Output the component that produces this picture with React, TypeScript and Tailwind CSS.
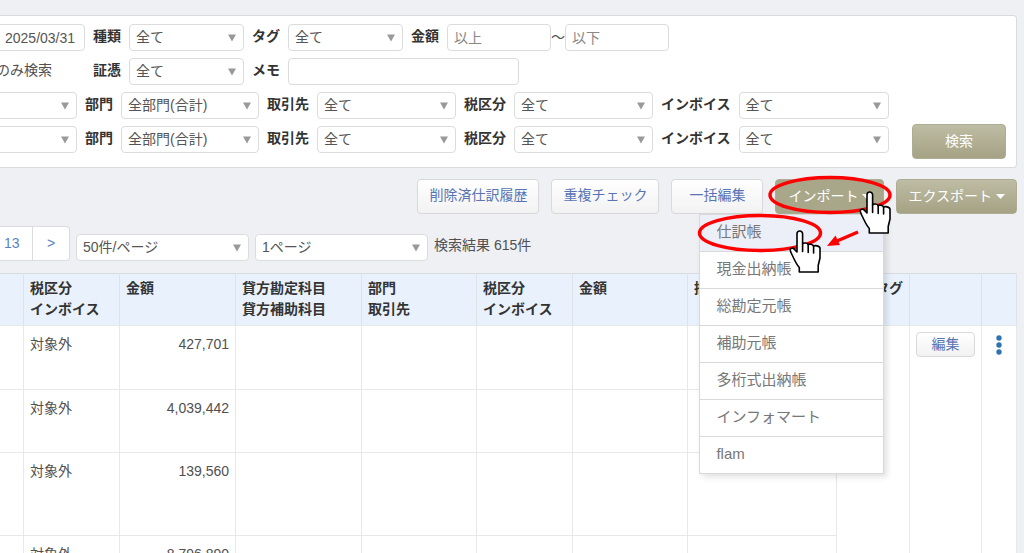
import type { ReactNode } from "react";

const importItems = [
  "仕訳帳",
  "現金出納帳",
  "総勘定元帳",
  "補助元帳",
  "多桁式出納帳",
  "インフォマート",
  "flam",
];

const rows = [
  { tax: "対象外", amount: "427,701", height: "h-16" },
  { tax: "対象外", amount: "4,039,442", height: "h-[63px]" },
  { tax: "対象外", amount: "139,560", height: "h-[83px]" },
  { tax: "対象外", amount: "8,796,890", height: "h-16" },
];

const box =
  "h-[27px] rounded border border-[#dcdcdc] bg-white px-1.5 text-sm leading-[21px] text-[#555] placeholder:text-[#888]";

function Select({ id, value, width, className = "" }: { id: string; value: string; width: string; className?: string }) {
  return (
    <div className={`relative shrink-0 ${width}`}>
      <select id={id} aria-label={value} className={`${box} block w-full appearance-none ${className}`}>
        <option>{value}</option>
      </select>
      <svg className="pointer-events-none absolute top-2.5 right-2" width="8" height="8" viewBox="0 0 8 8">
        <path d="M0 0.5h8L4 7.5z" fill="#999" />
      </svg>
    </div>
  );
}

function Label({ htmlFor, children }: { htmlFor: string; children: ReactNode }) {
  return (
    <label htmlFor={htmlFor} className="shrink-0 pb-[3px] font-bold text-[#333]">
      {children}
    </label>
  );
}

function LightButton({ children, className = "" }: { children: ReactNode; className?: string }) {
  return (
    <button
      type="button"
      className={`rounded border border-[#d9d9d9] bg-linear-to-b from-white to-[#f2f2f2] pb-0.5 text-[#5874b4] ${className}`}
    >
      {children}
    </button>
  );
}

function OliveButton({ children, className = "" }: { children: ReactNode; className?: string }) {
  return (
    <button
      type="button"
      className={`flex h-[35px] items-center justify-center gap-1 rounded border border-[#aeac93] text-white ${className}`}
    >
      {children}
    </button>
  );
}

function Caret() {
  return (
    <svg width="9" height="5" viewBox="0 0 9 5">
      <path d="M0 0h9L4.5 5z" fill="#fff" />
    </svg>
  );
}

function FilterRow({ n }: { n: number }) {
  return (
    <div className="flex items-center gap-2">
      <Select id={`account-${n}`} value="" width="w-[81px]" className="rounded-l-none" />
      <Label htmlFor={`dept-${n}`}>部門</Label>
      <Select id={`dept-${n}`} value="全部門(合計)" width="w-[138px]" />
      <Label htmlFor={`partner-${n}`}>取引先</Label>
      <Select id={`partner-${n}`} value="全て" width="w-[139px]" />
      <Label htmlFor={`tax-${n}`}>税区分</Label>
      <Select id={`tax-${n}`} value="全て" width="w-[139px]" />
      <Label htmlFor={`invoice-${n}`}>インボイス</Label>
      <Select id={`invoice-${n}`} value="全て" width="w-[150px]" />
    </div>
  );
}

const hand =
  "M8 22V3.8a2.8 2.8 0 0 1 5.6 0V14c.6-1.4 5-1.4 5.6.8 .8-1.2 4.8-.8 5.4 1.4 1-1 6.2-.6 6.4 2.2V28l-1.8 7.5V42H10.3v-4.5C8 35 6 31 4.6 28 3.5 25.5 1.5 22 1.3 20.3c-.3-2.3 2.6-2.8 4-1.2L8 22z";

function Hand({ x, y }: { x: number; y: number }) {
  return (
    <g transform={`translate(${x} ${y})`} stroke="#000" strokeWidth="1.6" strokeLinejoin="round" strokeLinecap="round">
      <path d={hand} fill="#fff" />
      <path d="M13.6 14v7.5M19.2 15v7.5M24.6 16.4v6.6" fill="none" />
    </g>
  );
}

// circles, arrow and pointers that walk the user through the import menu
function Guide() {
  return (
    <svg
      className="pointer-events-none absolute -top-1 -right-2.5 z-20 max-w-none"
      width="200"
      height="105"
      viewBox="0 0 200 105"
    >
      <g fill="none" stroke="#f00" strokeWidth="3.5">
        <ellipse cx="136" cy="20" rx="60" ry="17.5" />
        <ellipse cx="66" cy="58" rx="60.5" ry="17.5" />
        <path d="M164 57L143 66" />
      </g>
      <path d="M133 71l8.500-10.500 4.500 9.500z" fill="#f00" />
      <Hand x={165} y={16} />
      <Hand x={95} y={55} />
    </svg>
  );
}

export default function App() {
  return (
    <div className="h-screen overflow-hidden bg-[#eff0f4] text-sm leading-[21px] text-[#505050] [font-family:'Liberation_Sans','Noto_Sans_CJK_JP',sans-serif]">
      <main className="-ml-1 pt-[15px] pr-[7px]">
        <form className="flex items-end justify-between rounded-r border border-l-0 border-[#d9dbde] bg-white pt-2 pr-2.5 pb-2">
          <div className="flex flex-col gap-[7px] pb-1.5">
            <div className="flex items-center gap-2">
              <input aria-label="終了日" defaultValue="2025/03/31" className={`${box} w-[89px] px-2`} />
              <Label htmlFor="kind">種類</Label>
              <Select id="kind" value="全て" width="w-[115px]" />
              <Label htmlFor="tag">タグ</Label>
              <Select id="tag" value="全て" width="w-[115px]" />
              <Label htmlFor="min">金額</Label>
              <div className="flex items-center">
                <input id="min" placeholder="以上" className={`${box} w-[104px]`} />
                <span>～</span>
                <input aria-label="金額の上限" placeholder="以下" className={`${box} w-[104px]`} />
              </div>
            </div>
            <div className="flex items-center gap-2">
              <span className="w-[89px] pb-[3px]">のみ検索</span>
              <Label htmlFor="proof">証憑</Label>
              <Select id="proof" value="全て" width="w-[115px]" />
              <Label htmlFor="memo">メモ</Label>
              <input id="memo" className={`${box} w-[231px]`} />
            </div>
            <FilterRow n={1} />
            <FilterRow n={2} />
          </div>
          <OliveButton className="w-[94px] bg-linear-to-b from-[#bebca4] to-[#a5a285]">検索</OliveButton>
        </form>

        <div className="mt-[11px] flex justify-end gap-3">
          <LightButton className="h-[35px] px-[11px]">削除済仕訳履歴</LightButton>
          <LightButton className="h-[35px] px-[11px]">重複チェック</LightButton>
          <LightButton className="h-[35px] px-[17px]">一括編集</LightButton>
          <div className="relative">
            <OliveButton className="bg-[#a9a78a] px-3">
              インポート
              <Caret />
            </OliveButton>
            <ul className="absolute top-full right-0 z-10 w-[185px] border border-[#d9d9d9] bg-white text-[15px] text-[#777] shadow-[3px_3px_6px_rgba(0,0,0,0.12)]">
              {importItems.map((item) => (
                <li key={item} className="border-b border-[#d9d9d9] first:bg-[#eceff7] last:border-b-0">
                  <a href="#" className="flex h-9 items-center px-4 pb-[3px]">
                    {item}
                  </a>
                </li>
              ))}
            </ul>
            <Guide />
          </div>
          <OliveButton className="bg-linear-to-b from-[#bebca4] to-[#a5a285] px-[11px]">
            エクスポート
            <Caret />
          </OliveButton>
        </div>

        <div className="mt-3 flex items-end gap-1.5">
          <nav className="flex h-[35px] rounded-r border border-l-0 border-[#dcdcdc] bg-white text-[#5b7fc4]">
            <a href="#" className="flex w-[37px] items-center border-r border-[#dcdcdc] pl-2">
              13
            </a>
            <a href="#" className="flex w-9 items-center justify-center">
              &gt;
            </a>
          </nav>
          <Select id="per-page" value="50件/ページ" width="w-[173px]" />
          <Select id="page" value="1ページ" width="w-[173px]" />
          <p className="pb-[5px]">検索結果 615件</p>
        </div>

        <table className="mt-3 w-full table-fixed border-collapse border border-[#d9dde2] bg-white text-left align-top">
          <colgroup>
            <col className="w-[27px]" />
            <col className="w-[96px]" />
            <col className="w-[116px]" />
            <col className="w-[126px]" />
            <col className="w-[115px]" />
            <col className="w-[96px]" />
            <col className="w-[115px]" />
            <col />
            <col className="w-[73px]" />
            <col className="w-[72px]" />
            <col className="w-[35px]" />
          </colgroup>
          <thead>
            <tr className="h-[52px] bg-[#e8f1fc] text-[#333] [&>th]:border-x [&>th]:border-[#dfe3e8] [&>th]:px-1.5 [&>th]:pt-1 [&>th]:align-top">
              <th></th>
              <th>
                税区分
                <br />
                インボイス
              </th>
              <th>金額</th>
              <th>
                貸方勘定科目
                <br />
                貸方補助科目
              </th>
              <th>
                部門
                <br />
                取引先
              </th>
              <th>
                税区分
                <br />
                インボイス
              </th>
              <th>金額</th>
              <th>摘要</th>
              <th className="text-right">タグ</th>
              <th></th>
              <th></th>
            </tr>
          </thead>
          <tbody className="border-t border-[#d9dde2]">
            {rows.map((row, i) => (
              <tr
                key={i}
                className={`${row.height} [&>td]:border [&>td]:border-[#e8e8e8] [&>td]:px-1.5 [&>td]:pt-2 [&>td]:align-top`}
              >
                <td></td>
                <td>{row.tax}</td>
                <td className="text-right">{row.amount}</td>
                <td></td>
                <td></td>
                <td></td>
                <td></td>
                <td></td>
                {i === 0 && (
                  <>
                    <td rowSpan={rows.length}></td>
                    <td rowSpan={rows.length} className="pt-1.5!">
                      <LightButton className="block h-[25px] w-full leading-5">編集</LightButton>
                    </td>
                    <td rowSpan={rows.length} className="pt-1.5!">
                      <button type="button" aria-label="メニュー" className="mx-auto block pt-[3px]">
                        <svg width="6" height="20" viewBox="0 0 6 20" fill="#2e74b5">
                          <circle cx="3" cy="3" r="2.7" />
                          <circle cx="3" cy="10" r="2.7" />
                          <circle cx="3" cy="17" r="2.7" />
                        </svg>
                      </button>
                    </td>
                  </>
                )}
              </tr>
            ))}
          </tbody>
        </table>
      </main>
    </div>
  );
}
